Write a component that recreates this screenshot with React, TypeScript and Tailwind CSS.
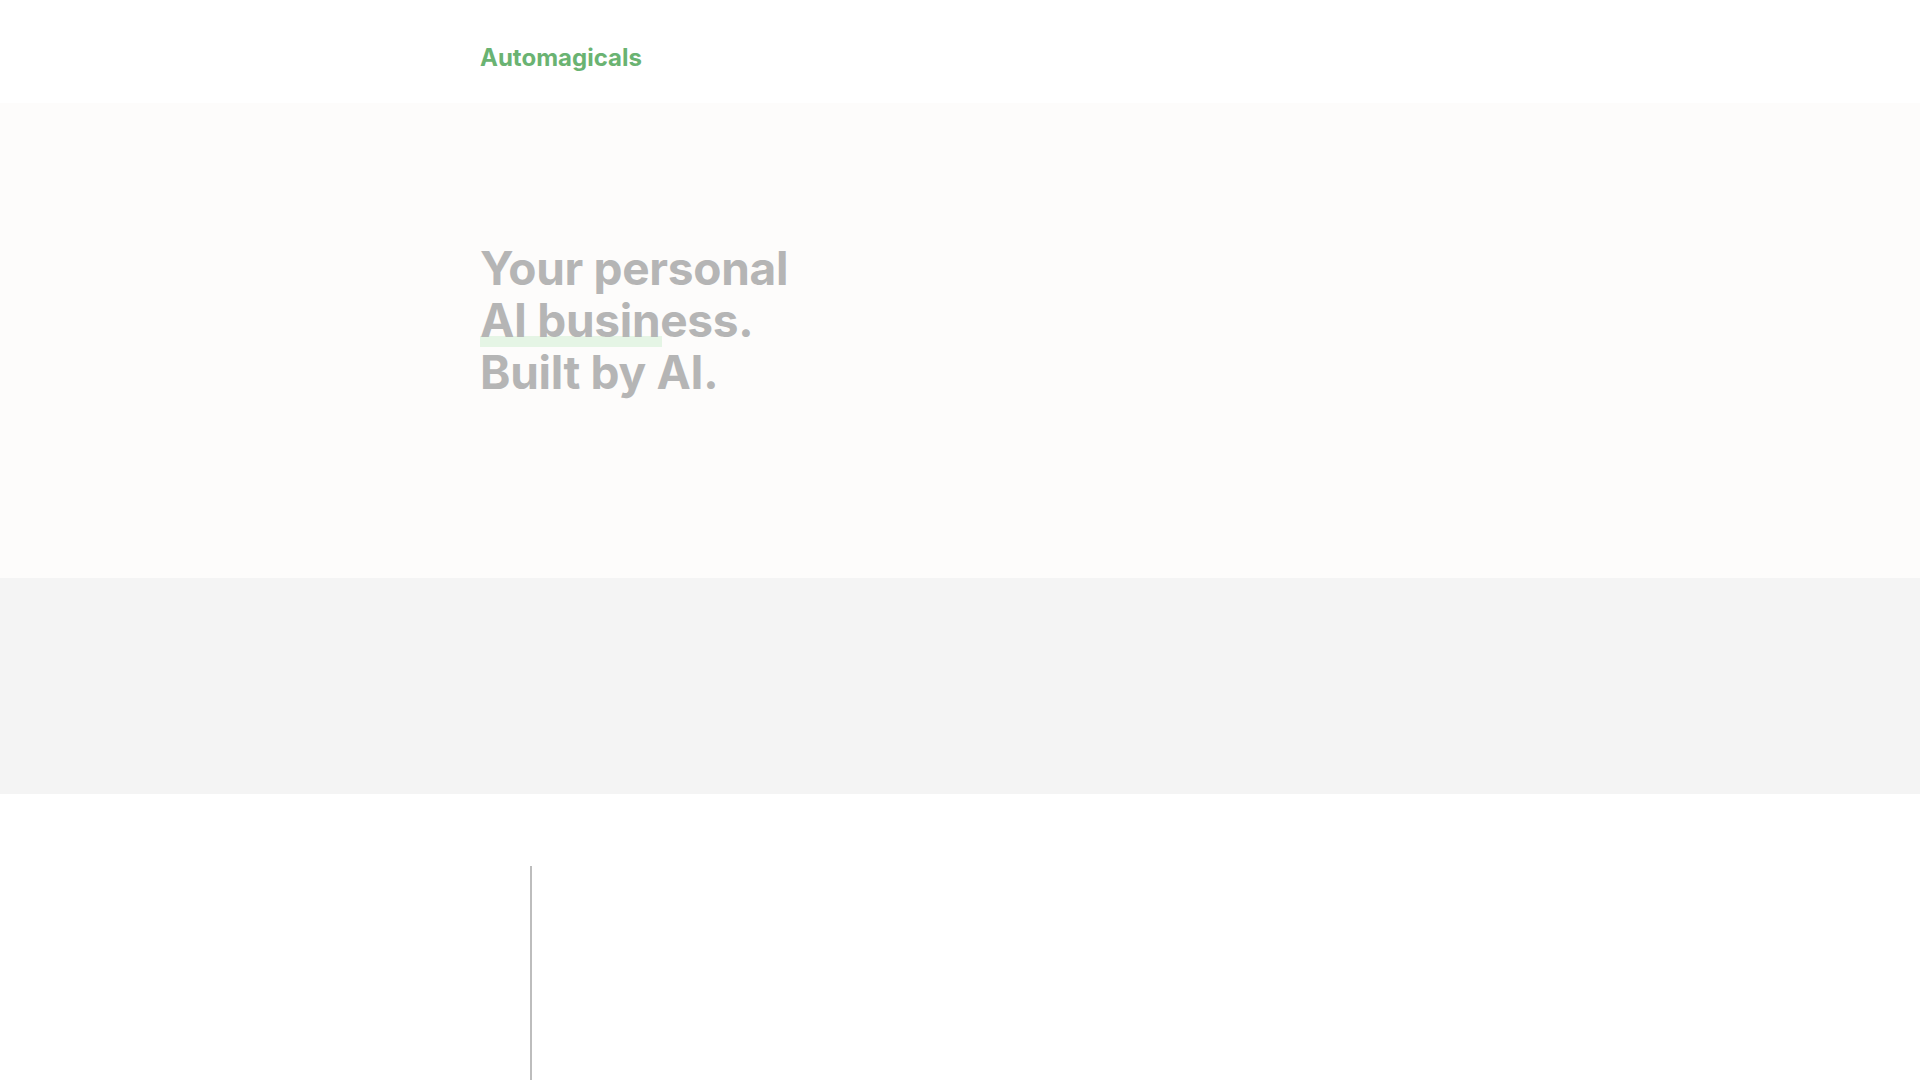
import React from "react";

export default function App() {
  return (
    <div className="min-h-screen bg-white" style={{ fontFamily: "Inter, 'Noto Sans', sans-serif" }}>
      <header className="h-[103px] bg-white">
        <div className="max-w-[960px] mx-auto pt-[43px]">
          <span className="block text-[24px] leading-[29px] font-bold text-[#6ab372]">Automagicals</span>
        </div>
      </header>
      <section className="bg-[#fdfcfb] pt-[139px] pb-[180px]">
        <div className="max-w-[960px] mx-auto">
          <h1 className="text-[46px] leading-[52px] font-bold text-[#b5b5b5] tracking-[-0.3px]">
            <div>Your personal</div>
            <div className="relative">
              <div className="absolute left-0 top-[42px] h-[11px] w-[182px] bg-[#e5f5e5]"></div>
              <span className="relative">AI business.</span>
            </div>
            <div>Built by AI.</div>
          </h1>
        </div>
      </section>
      <section className="bg-[#f4f4f4] h-[216px]"></section>
      <section className="bg-white pt-[72px]">
        <div className="max-w-[960px] mx-auto">
          <div className="ml-[50px] w-[2px] h-[215px] bg-[#bdbdbd]"></div>
        </div>
      </section>
    </div>
  );
}
